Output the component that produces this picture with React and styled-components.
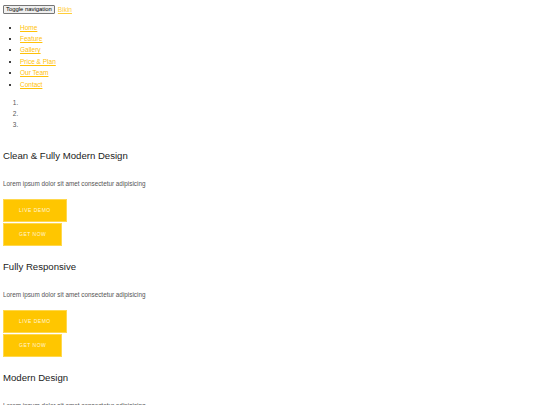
import React from 'react';
import styled, { createGlobalStyle } from 'styled-components';

const GlobalStyle = createGlobalStyle`
  body {
    margin: 3px;
    background: #ffffff;
    font-family: "Liberation Sans", Arial, sans-serif;
  }
`;

const slides = [
  'Clean & Fully Modern Design',
  'Fully Responsive',
  'Modern Design',
];

const links = ['Home', 'Feature', 'Gallery', 'Price & Plan', 'Our Team', 'Contact'];

const App = () => {
  return (
    <>
      <GlobalStyle />
      <Header>
        <ToggleButton type="button">Toggle navigation</ToggleButton>
        <Brand href="#">Bikin</Brand>
      </Header>
      <NavList>
        {links.map((l) => (
          <li key={l}>
            <NavLink href="#">{l}</NavLink>
          </li>
        ))}
      </NavList>
      <Indicators>
        <li />
        <li />
        <li />
      </Indicators>
      {slides.map((title) => (
        <Slide key={title}>
          <Title>{title}</Title>
          <Text>Lorem ipsum dolor sit amet consectetur adipisicing</Text>
          <Actions>
            <ActionButton href="#">Live Demo</ActionButton>
            <ActionButton href="#">Get Now</ActionButton>
          </Actions>
        </Slide>
      ))}
    </>
  );
};

export default App;

const Header = styled.div`
  display: flex;
  align-items: center;
  gap: 3px;
  margin-top: 2px;
  height: 9px;
`;

const ToggleButton = styled.button`
  font-family: "Liberation Sans", Arial, sans-serif;
  font-size: 5.9px;
  line-height: 7px;
  height: 9px;
  padding: 0 2px;
  color: #000;
  background: #efefef;
  border: 1px solid #767676;
  border-radius: 1px;
`;

const Brand = styled.a`
  font-size: 6.5px;
  color: #ffcd38;
  text-decoration: underline;
`;

const NavList = styled.ul`
  margin: 7.5px 0 0;
  padding-left: 17px;
  list-style: disc;
  font-size: 6.5px;
  line-height: 11.4px;
  color: #000;
`;

const NavLink = styled.a`
  color: #ffc107;
  text-decoration: underline;
`;

const Indicators = styled.ol`
  margin: 6.6px 0 4.5px;
  padding-left: 17px;
  font-size: 6.5px;
  line-height: 11.4px;
  color: #555;

  li {
    height: 11.4px;
  }
`;

const Slide = styled.section`
  padding-top: 15px;
`;

const Title = styled.h2`
  margin: 0;
  font-size: 9.6px;
  line-height: 11px;
  font-weight: 400;
  color: #222;
`;

const Text = styled.p`
  margin: 18px 0 0;
  font-size: 6.35px;
  line-height: 9px;
  color: #555;
`;

const Actions = styled.div`
  display: flex;
  flex-direction: column;
  align-items: flex-start;
  gap: 1.5px;
  margin-top: 10.5px;
`;

const ActionButton = styled.a`
  display: inline-block;
  box-sizing: border-box;
  height: 23px;
  line-height: 21px;
  padding: 0 15px;
  background: #ffc600;
  border: 1px solid #ffd84d;
  color: rgba(255, 255, 255, 0.85);
  font-size: 5px;
  letter-spacing: 0.5px;
  text-transform: uppercase;
  text-decoration: none;
`;
